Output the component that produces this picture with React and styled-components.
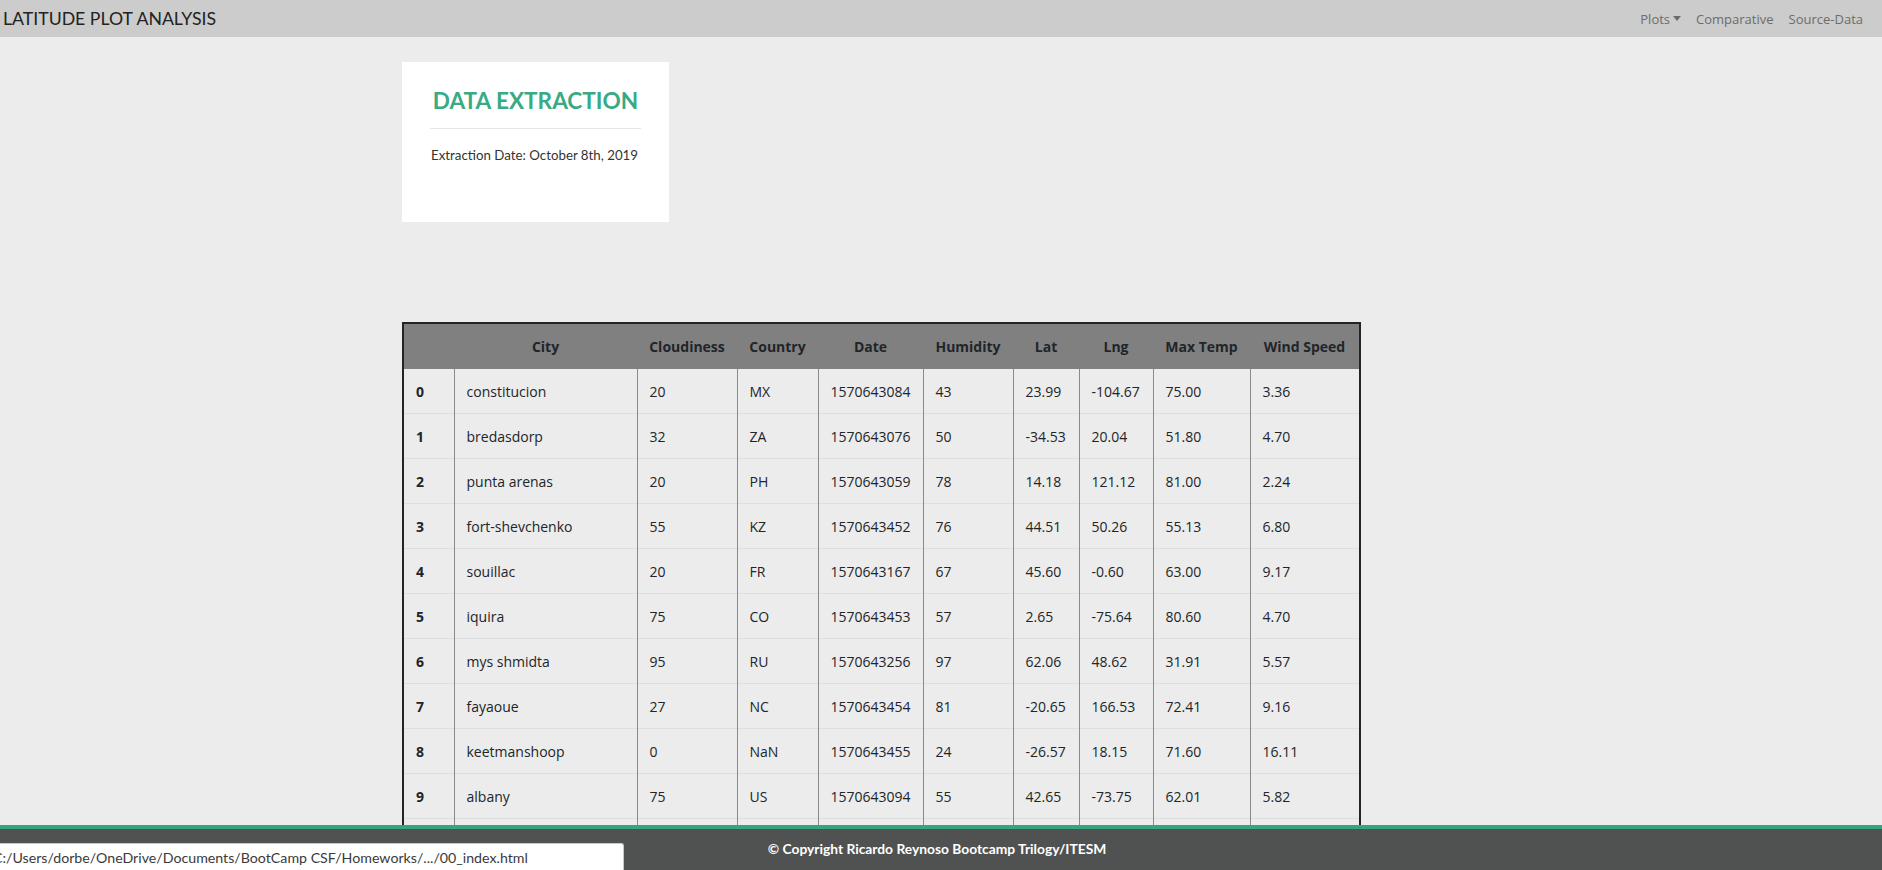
import styled, { createGlobalStyle } from "styled-components";

const GlobalStyle = createGlobalStyle`
  body {
    margin: 0;
    background: #ececec;
    font-family: "Open Sans", "Noto Sans", sans-serif;
    color: #212529;
  }
`;

const Navbar = styled.nav`
  display: flex;
  align-items: center;
  justify-content: space-between;
  height: 37px;
  background: #cbcccb;
  padding: 0 19px 0 3px;
`;

const Brand = styled.div`
  font-family: Lato, "Open Sans", sans-serif;
  font-size: 17.7px;
  color: #222;
`;

const NavLinks = styled.div`
  display: flex;
  align-items: center;
  gap: 15px;
`;

const NavLink = styled.a`
  display: flex;
  align-items: center;
  font-family: "Open Sans", sans-serif;
  font-size: 13px;
  color: #6c6c6c;
  text-decoration: none;
`;

const Caret = styled.span`
  display: inline-block;
  margin-left: 3px;
  border-top: 5px solid #6c6c6c;
  border-left: 4px solid transparent;
  border-right: 4px solid transparent;
`;

const Main = styled.main`
  padding: 25px 0 120px 402px;
`;

const Card = styled.section`
  width: 267px;
  height: 160px;
  box-sizing: border-box;
  background: #fff;
  padding: 25px 28px 0;
`;

const Title = styled.h2`
  margin: 0;
  text-align: center;
  font-family: Lato, sans-serif;
  font-weight: 700;
  font-size: 22.6px;
  color: #38aa84;
  padding-bottom: 14px;
  border-bottom: 1px solid #e6e6e6;
`;

const DateLine = styled.p`
  margin: 18px 0 0 1px;
  font-family: Lato, sans-serif;
  font-size: 13.3px;
  color: #333;
`;

const TableFrame = styled.div`
  margin-top: 100px;
  width: 959px;
  box-sizing: border-box;
  border: 2px solid #242424;
  border-bottom: none;
`;

const Table = styled.table`
  width: 100%;
  table-layout: fixed;
  border-collapse: collapse;
  font-size: 14px;
  line-height: 21px;
`;

const Head = styled.thead`
  background: #808080;
`;

const Th = styled.th`
  padding: 12px 0;
  font-weight: 700;
  text-align: center;
  color: #212529;
  white-space: nowrap;
`;

const Tr = styled.tr`
  border-top: 1px solid #dcdfe2;
  &:first-child {
    border-top: none;
  }
`;

const Td = styled.td`
  padding: 12px 12px 11px;
  border-left: 1px solid #8a8a8a;
  white-space: nowrap;
  font-weight: ${(p) => (p.$index ? 700 : 400)};
  &:first-child {
    border-left: none;
  }
`;

const Footer = styled.footer`
  position: fixed;
  left: 0;
  right: 0;
  bottom: 0;
  height: 41px;
  background: #505251;
  border-top: 4px solid #36a57d;
  display: flex;
  align-items: center;
  justify-content: center;
`;

const FooterText = styled.div`
  font-family: "Liberation Sans Narrow", Lato, sans-serif;
  font-weight: 700;
  font-size: 13.8px;
  color: #fff;
  margin: -3px 8px 0 0;
`;

const StatusBubble = styled.div`
  position: fixed;
  left: 0;
  bottom: 0;
  width: 623px;
  height: 26px;
  background: #fff;
  border-top: 1px solid #c8c8c8;
  border-right: 1px solid #c8c8c8;
  border-top-right-radius: 3px;
  overflow: hidden;
  display: flex;
  align-items: center;
`;

const StatusText = styled.span`
  margin-left: -7px;
  font-family: Lato, sans-serif;
  font-size: 14.2px;
  color: #3a3a3a;
  white-space: nowrap;
`;

const columns = [
  { key: "", w: 50 },
  { key: "City", w: 183 },
  { key: "Cloudiness", w: 100 },
  { key: "Country", w: 81 },
  { key: "Date", w: 105 },
  { key: "Humidity", w: 90 },
  { key: "Lat", w: 66 },
  { key: "Lng", w: 74 },
  { key: "Max Temp", w: 97 },
  { key: "Wind Speed", w: 109 },
];

const rows = [
  ["constitucion", "20", "MX", "1570643084", "43", "23.99", "-104.67", "75.00", "3.36"],
  ["bredasdorp", "32", "ZA", "1570643076", "50", "-34.53", "20.04", "51.80", "4.70"],
  ["punta arenas", "20", "PH", "1570643059", "78", "14.18", "121.12", "81.00", "2.24"],
  ["fort-shevchenko", "55", "KZ", "1570643452", "76", "44.51", "50.26", "55.13", "6.80"],
  ["souillac", "20", "FR", "1570643167", "67", "45.60", "-0.60", "63.00", "9.17"],
  ["iquira", "75", "CO", "1570643453", "57", "2.65", "-75.64", "80.60", "4.70"],
  ["mys shmidta", "95", "RU", "1570643256", "97", "62.06", "48.62", "31.91", "5.57"],
  ["fayaoue", "27", "NC", "1570643454", "81", "-20.65", "166.53", "72.41", "9.16"],
  ["keetmanshoop", "0", "NaN", "1570643455", "24", "-26.57", "18.15", "71.60", "16.11"],
  ["albany", "75", "US", "1570643094", "55", "42.65", "-73.75", "62.01", "5.82"],
  ["hilo", "90", "US", "1570643185", "61", "19.71", "-155.08", "82.40", "6.93"],
  ["ushuaia", "40", "AR", "1570643068", "75", "-54.81", "-68.31", "39.20", "13.87"],
];

export default function App() {
  return (
    <>
      <GlobalStyle />
      <Navbar>
        <Brand>LATITUDE PLOT ANALYSIS</Brand>
        <NavLinks>
          <NavLink href="#">
            Plots
            <Caret />
          </NavLink>
          <NavLink href="#">Comparative</NavLink>
          <NavLink href="#">Source-Data</NavLink>
        </NavLinks>
      </Navbar>
      <Main>
        <Card>
          <Title>DATA EXTRACTION</Title>
          <DateLine>Extraction Date: October 8th, 2019</DateLine>
        </Card>
        <TableFrame>
          <Table>
            <colgroup>
              {columns.map((c, i) => (
                <col key={i} style={{ width: c.w }} />
              ))}
            </colgroup>
            <Head>
              <tr>
                {columns.map((c, i) => (
                  <Th key={i}>{c.key}</Th>
                ))}
              </tr>
            </Head>
            <tbody>
              {rows.map((r, i) => (
                <Tr key={i}>
                  <Td $index>{i}</Td>
                  {r.map((v, j) => (
                    <Td key={j}>{v}</Td>
                  ))}
                </Tr>
              ))}
            </tbody>
          </Table>
        </TableFrame>
      </Main>
      <Footer>
        <FooterText>© Copyright Ricardo Reynoso Bootcamp Trilogy/ITESM</FooterText>
      </Footer>
      <StatusBubble>
        <StatusText>C:/Users/dorbe/OneDrive/Documents/BootCamp CSF/Homeworks/.../00_index.html</StatusText>
      </StatusBubble>
    </>
  );
}
